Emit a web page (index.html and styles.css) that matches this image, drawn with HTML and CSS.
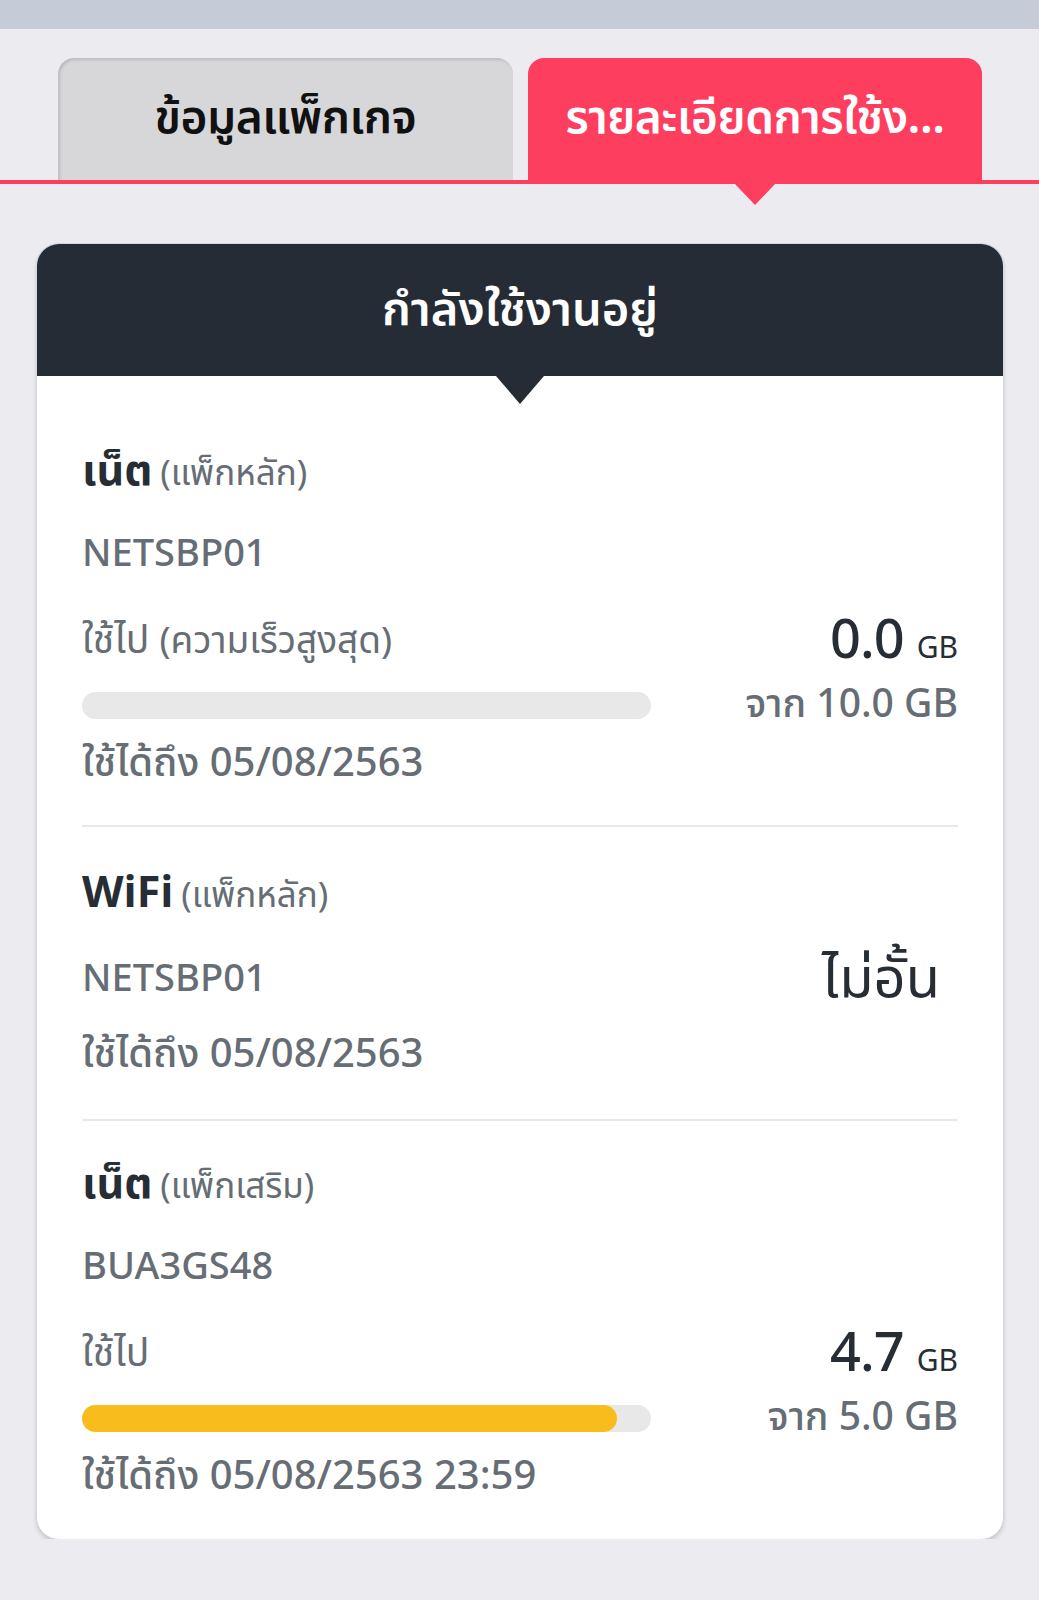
FILE: index.html
```html
<!DOCTYPE html>
<html lang="th">

<head>
    <meta charset="UTF-8">
    <meta name="viewport" content="width=device-width, initial-scale=1.0">
    <title>รายละเอียดการใช้งาน</title>
    <link rel="stylesheet" href="styles.css">
</head>

<body>
    <div class="topbar"></div>

    <div class="tabs">
        <div class="tab">ข้อมูลแพ็กเกจ</div>
        <div class="tab active">รายละเอียดการใช้ง...</div>
    </div>

    <div class="card">
        <div class="card-head">กำลังใช้งานอยู่</div>

        <div class="section first">
            <div class="title"><b>เน็ต</b> <span class="sub">(แพ็กหลัก)</span></div>
            <div class="code">NETSBP01</div>
            <div class="row usage">
                <span class="label">ใช้ไป <span class="sub">(ความเร็วสูงสุด)</span></span>
                <span class="amount">0.0 <small>GB</small></span>
            </div>
            <div class="row bar-row">
                <div class="bar"><div class="fill" style="width: 0%"></div></div>
                <span class="total">จาก 10.0 GB</span>
            </div>
            <div class="date">ใช้ได้ถึง 05/08/2563</div>
        </div>

        <div class="section wifi">
            <div class="title"><b>WiFi</b> <span class="sub">(แพ็กหลัก)</span></div>
            <div class="row code-row">
                <span class="code">NETSBP01</span>
                <span class="unlimited">ไม่อั้น</span>
            </div>
            <div class="date">ใช้ได้ถึง 05/08/2563</div>
        </div>

        <div class="section last">
            <div class="title"><b>เน็ต</b> <span class="sub">(แพ็กเสริม)</span></div>
            <div class="code">BUA3GS48</div>
            <div class="row usage">
                <span class="label">ใช้ไป</span>
                <span class="amount">4.7 <small>GB</small></span>
            </div>
            <div class="row bar-row">
                <div class="bar"><div class="fill" style="width: 94%"></div></div>
                <span class="total">จาก 5.0 GB</span>
            </div>
            <div class="date">ใช้ได้ถึง 05/08/2563 23:59</div>
        </div>
    </div>
</body>

</html>
```

FILE: styles.css
```css
body {
    margin: 0;
    background-color: #ebebf0;
    font-family: "Noto Sans Thai", "Noto Sans", "DejaVu Sans", sans-serif;
    color: #272d35;
}

.topbar {
    height: 29px;
    background-color: #c5ccd7;
}

/* tabs */
.tabs {
    display: flex;
    gap: 15px;
    padding: 29px 0 0 58px;
    border-bottom: 4px solid #fd3e5f;
    position: relative;
}

.tab {
    width: 455px;
    height: 122px;
    border-radius: 16px 16px 0 0;
    background-color: #d7d7d9;
    box-shadow: inset 2px 2px 3px rgba(0, 0, 0, 0.12);
    display: flex;
    align-items: center;
    justify-content: center;
    font-size: 46px;
    font-weight: 600;
    letter-spacing: -0.5px;
    color: #111;
}

.tab.active {
    width: 454px;
    background-color: #fd3e5f;
    box-shadow: none;
    color: #fff;
    position: relative;
}

.tab.active::after {
    content: "";
    position: absolute;
    left: 50%;
    bottom: -25px;
    margin-left: -20px;
    border-left: 20px solid transparent;
    border-right: 20px solid transparent;
    border-top: 21px solid #fd3e5f;
}

/* card */
.card {
    margin: 60px 36px 0 37px;
    background-color: #fff;
    border-radius: 22px;
    box-shadow: 0 0 0 1px #d4d8de, 0 3px 5px rgba(0, 0, 0, 0.2);
    padding: 0 45px 37px;
}

.card-head {
    margin: 0 -45px;
    height: 132px;
    border-radius: 22px 22px 0 0;
    background-color: #262c35;
    color: #fff;
    font-size: 47px;
    font-weight: 600;
    display: flex;
    align-items: center;
    justify-content: center;
    position: relative;
}

.card-head::after {
    content: "";
    position: absolute;
    left: 50%;
    bottom: -28px;
    margin-left: -24px;
    border-left: 24px solid transparent;
    border-right: 24px solid transparent;
    border-top: 28px solid #262c35;
}

.section {
    padding: 36px 0;
    border-bottom: 2px solid #e8e8e8;
}

.section.first {
    padding-top: 68px;
}

.section.wifi {
    padding: 39px 0;
}

.section.last {
    border-bottom: none;
    padding-bottom: 0;
}

.title {
    height: 56px;
    line-height: 56px;
    font-size: 30px;
}

.title b {
    font-size: 43px;
}

.sub {
    color: #666d75;
    font-size: 35px;
}

.label .sub {
    font-size: 37px;
}

.code {
    margin-top: 30px;
    line-height: 50px;
    font-size: 38px;
    font-weight: 500;
    color: #666d75;
}

.row {
    display: flex;
    justify-content: space-between;
    align-items: center;
}

.usage {
    margin-top: 31px;
    height: 60px;
}

.label {
    font-size: 39px;
    color: #666d75;
}

.amount {
    font-size: 54px;
    font-weight: 500;
    letter-spacing: -1px;
}

.amount small {
    font-size: 30px;
    font-weight: 400;
    letter-spacing: 0;
}

.bar-row {
    margin-top: 14px;
    height: 40px;
}

.bar {
    width: 569px;
    height: 27px;
    border-radius: 14px;
    background-color: #e8e8e8;
}

.fill {
    height: 100%;
    border-radius: 14px;
    background-color: #f8bd1c;
}

.total {
    font-size: 39px;
    font-weight: 500;
    color: #666d75;
}

.date {
    margin-top: 14px;
    line-height: 50px;
    font-size: 40px;
    font-weight: 500;
    color: #666d75;
}

.code-row {
    margin-top: 33px;
    height: 50px;
}

.code-row .code {
    margin-top: 0;
}

.unlimited {
    font-size: 56px;
    padding-right: 18px;
}

.wifi .date {
    margin-top: 25px;
}
```
